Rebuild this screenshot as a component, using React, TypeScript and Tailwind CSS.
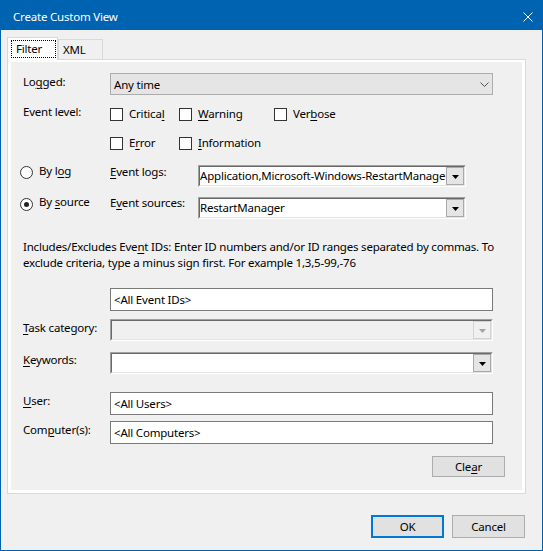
import React from "react";

function K({ children }: { children: React.ReactNode }) {
  return <span className="underline decoration-1 underline-offset-[2px]">{children}</span>;
}

function Check({ children, className = "" }: { children: React.ReactNode; className?: string }) {
  return (
    <div className={`flex items-start ${className}`}>
      <div className="mt-[2px] w-[13px] h-[13px] shrink-0 border border-[#333333] bg-white" />
      <span className="ml-[6px] whitespace-nowrap">{children}</span>
    </div>
  );
}

function Radio({ checked, children, boxClass }: { checked?: boolean; children: React.ReactNode; boxClass: string }) {
  return (
    <div className="flex items-start w-[90px] shrink-0">
      <div
        className={`${boxClass} w-[13px] h-[13px] shrink-0 rounded-full border border-[#333333] bg-white flex items-center justify-center`}
      >
        {checked && <div className="w-[5px] h-[5px] rounded-full bg-[#222222]" />}
      </div>
      <span className="ml-[6px] whitespace-nowrap">{children}</span>
    </div>
  );
}

function DropArrow({ disabled }: { disabled?: boolean }) {
  return (
    <svg width="7" height="4" viewBox="0 0 7 4" className="mt-[2px]">
      <polygon points="0,0 7,0 3.5,4" fill={disabled ? "#a3a3a3" : "#000000"} />
    </svg>
  );
}

function Combo3D({
  className,
  text,
  disabled,
}: {
  className: string;
  text?: string;
  disabled?: boolean;
}) {
  return (
    <div
      className={`${className} h-[22px] shrink-0 border border-t-[#a0a0a0] border-l-[#a0a0a0] border-r-white border-b-white`}
    >
      <div
        className={`h-full flex border border-t-[#696969] border-l-[#696969] border-r-[#e3e3e3] border-b-[#e3e3e3] ${
          disabled ? "bg-[#f0f0f0]" : "bg-white"
        }`}
      >
        <div className="flex-1 min-w-0 overflow-hidden whitespace-nowrap leading-[16px] pt-[1px]">{text}</div>
        <div
          className={`w-[18px] h-[18px] shrink-0 flex items-center justify-center border ${
            disabled ? "bg-[#f0f0f0] border-[#d4d4d4]" : "bg-[#e5e5e5] border-[#a9a9a9]"
          }`}
        >
          <DropArrow disabled={disabled} />
        </div>
      </div>
    </div>
  );
}

function TextBox({ text }: { text: string }) {
  return (
    <div className="w-[383px] h-[23px] shrink-0 border border-[#7a7a7a] bg-white pl-[3px] pt-[3px] leading-[16px] whitespace-nowrap">
      {text}
    </div>
  );
}

function Label({ children, className = "" }: { children: React.ReactNode; className?: string }) {
  return <div className={`w-[87px] shrink-0 whitespace-nowrap ${className}`}>{children}</div>;
}

function Button({ children, primary, className = "" }: { children: React.ReactNode; primary?: boolean; className?: string }) {
  return (
    <div
      className={`${className} bg-[#e1e1e1] flex items-center justify-center ${
        primary ? "border-2 border-[#0078d7]" : "border border-[#adadad]"
      }`}
    >
      {children}
    </div>
  );
}

export default function App() {
  return (
    <div className="w-[543px] h-[551px] bg-[#f0f0f0] border border-[#0063b1] flex flex-col font-['Noto_Sans',sans-serif] text-[11.5px] tracking-[-0.2px] leading-[16px] text-black">
      {/* title bar */}
      <div className="h-[29px] shrink-0 bg-[#0063b1] flex items-center justify-between pl-[12px] pr-[9px] text-white">
        <span className="pt-[2px]">Create Custom View</span>
        <svg width="10" height="10" viewBox="0 0 10 10" className="mt-[3px]">
          <path d="M0.5 0.5 L9.5 9.5 M9.5 0.5 L0.5 9.5" stroke="#ffffff" strokeWidth="1" />
        </svg>
      </div>

      {/* tabs */}
      <div className="mt-[7px] ml-[6px] h-[22px] flex items-end">
        <div className="relative z-10 -mb-px w-[51px] h-[23px] bg-white border border-b-0 border-[#d9d9d9] pt-[2px] pl-[3px]">
          <div className="w-[45px] h-[18px] border border-dotted border-black pl-[4px]">Filter</div>
        </div>
        <div className="w-[45px] h-[20px] bg-[#f0f0f0] border border-b-0 border-[#d9d9d9] pl-[4px] pt-[2px]">XML</div>
      </div>

      {/* tab page */}
      <div className="ml-[6px] w-[519px] h-[435px] border border-[#d9d9d9]">
        <div className="h-full border-l-[3px] border-r-[3px] border-t-2 border-b-[3px] border-white bg-[#f0f0f0] flex flex-col">
          {/* Logged */}
          <div className="mt-[11px] pl-[12px] flex items-start">
            <Label className="mt-px">
              Lo<K>g</K>ged:
            </Label>
            <div className="w-[383px] h-[22px] bg-[#e5e5e5] border border-[#adadad] flex items-center justify-between pl-[3px] pr-[3px]">
              <span className="pt-[1px]">Any time</span>
              <svg width="9" height="5" viewBox="0 0 9 5">
                <path d="M0.5 0.5 L4.5 4.5 L8.5 0.5" stroke="#505050" fill="none" strokeWidth="1" />
              </svg>
            </div>
          </div>

          {/* Event level */}
          <div className="mt-[8px] pl-[12px] flex items-start">
            <Label className="mt-px">Event level:</Label>
            <div className="flex flex-col mt-[3px]">
              <div className="flex">
                <Check className="w-[69px]">
                  Critica<K>l</K>
                </Check>
                <Check className="w-[95px]">
                  <K>W</K>arning
                </Check>
                <Check>
                  Ver<K>b</K>ose
                </Check>
              </div>
              <div className="flex mt-[13px]">
                <Check className="w-[69px]">
                  E<K>r</K>ror
                </Check>
                <Check>
                  <K>I</K>nformation
                </Check>
              </div>
            </div>
          </div>

          {/* By log */}
          <div className="mt-[12px] pl-[9px] flex items-start">
            <Radio boxClass="mt-[3px]">
              By l<K>o</K>g
            </Radio>
            <div className="w-[88px] shrink-0 mt-px">
              <K>E</K>vent logs:
            </div>
            <Combo3D className="mt-[2px] w-[268px]" text="Application,Microsoft-Windows-RestartManager" />
          </div>

          {/* By source */}
          <div className="mt-[7px] pl-[9px] flex items-start">
            <Radio boxClass="mt-[4px]" checked>
              By <K>s</K>ource
            </Radio>
            <div className="w-[88px] shrink-0 mt-px">
              E<K>v</K>ent sources:
            </div>
            <Combo3D className="mt-[3px] w-[268px]" text="RestartManager" />
          </div>

          {/* help text */}
          <div className="mt-[20px] pl-[12px] whitespace-nowrap">
            <div>
              Includes/Excludes Eve<K>n</K>t IDs: Enter ID numbers and/or ID ranges separated by commas. To
            </div>
            <div>exclude criteria, type a minus sign first. For example 1,3,5-99,-76</div>
          </div>

          {/* Event IDs */}
          <div className="mt-[17px] pl-[99px]">
            <TextBox text="<All Event IDs>" />
          </div>

          {/* Task category */}
          <div className="mt-[8px] pl-[12px] flex items-start">
            <Label className="mt-px">
              <K>T</K>ask category:
            </Label>
            <Combo3D className="w-[383px]" disabled />
          </div>

          {/* Keywords */}
          <div className="mt-[11px] pl-[12px] flex items-start">
            <Label>
              <K>K</K>eywords:
            </Label>
            <Combo3D className="w-[383px]" />
          </div>

          {/* User */}
          <div className="mt-[18px] pl-[12px] flex items-start">
            <Label className="mt-px">
              <K>U</K>ser:
            </Label>
            <TextBox text="<All Users>" />
          </div>

          {/* Computer */}
          <div className="mt-[6px] pl-[12px] flex items-start">
            <Label className="mt-px">
              Com<K>p</K>uter(s):
            </Label>
            <TextBox text="<All Computers>" />
          </div>

          <div className="mt-[12px] flex justify-end pr-[17px]">
            <Button className="w-[73px] h-[21px]">
              Cle<K>a</K>r
            </Button>
          </div>
        </div>
      </div>

      {/* dialog buttons */}
      <div className="mt-[21px] flex justify-end gap-[8px] pr-[17px]">
        <Button primary className="w-[73px] h-[23px]">
          OK
        </Button>
        <Button className="w-[73px] h-[23px]">Cancel</Button>
      </div>
    </div>
  );
}
